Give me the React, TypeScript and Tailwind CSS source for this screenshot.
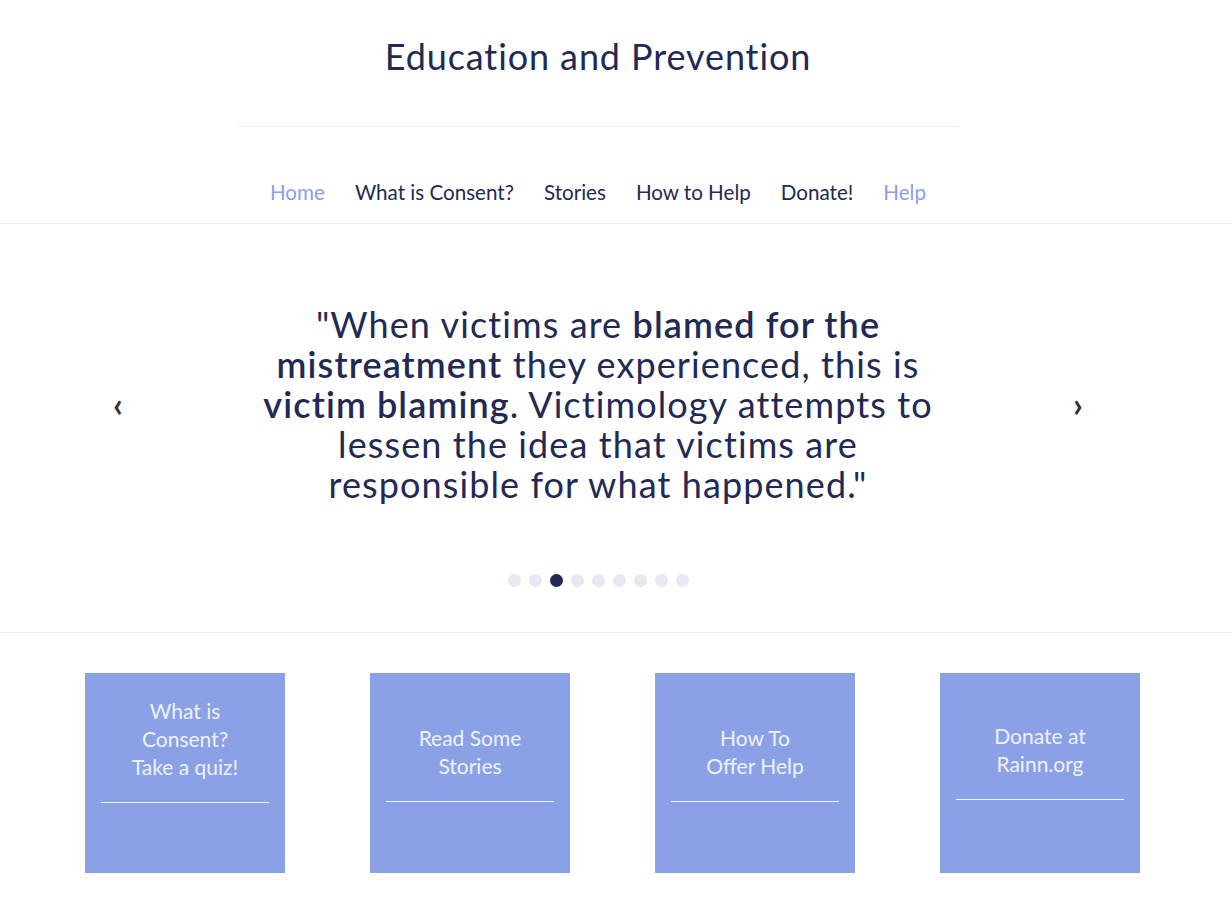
const navy = "text-[#222a54]";

function NavLink({ label, active }: { label: string; active?: boolean }) {
  return (
    <a href="#" className={active ? "text-[#8c9eeb]" : navy}>
      {label}
    </a>
  );
}

function Card({ lines, top }: { lines: string[]; top?: string }) {
  return (
    <a href="#" className="flex h-[200px] w-[200px] flex-col bg-[#8aa2e5] px-4">
      <div className={`flex flex-col justify-end ${top ?? "h-[107px]"} text-center text-[21px] leading-[28px] text-[#eef1fb]`}>
        {lines.map((l) => (
          <span key={l}>{l}</span>
        ))}
      </div>
      <div className="mt-[21px] border-t border-[#f4f6fd]" />
    </a>
  );
}

export default function App() {
  const dots = [0, 1, 2, 3, 4, 5, 6, 7, 8];
  return (
    <div className="min-h-screen bg-white font-['Lato',sans-serif]">
      <header className="border-b border-[#ececec]">
        <div className="pr-[36px]">
          <h1 className={`pt-[34px] text-center text-[36px] leading-[44px] tracking-[0.9px] ${navy}`}>
            Education and Prevention
          </h1>
          <div className="mx-auto mt-[48px] w-[721px] border-t border-[#eeeeee]" />
          <nav className="mt-[51px] flex justify-center gap-[30px] pb-[17px] text-[20.6px] leading-[28px]">
            <NavLink label="Home" active />
            <NavLink label="What is Consent?" />
            <NavLink label="Stories" />
            <NavLink label="How to Help" />
            <NavLink label="Donate!" />
            <NavLink label="Help" active />
          </nav>
        </div>
      </header>

      <section className="border-b border-[#ececec] pb-[45px] pt-[80px]">
        <div className="pr-[36px]">
          <div className="flex items-center justify-between px-[113px]">
            <button className="w-[10px] text-[34px] font-bold leading-none text-[#333]">‹</button>
            <p className={`text-center text-[36px] leading-[40px] tracking-[1.1px] ${navy}`}>
              "When victims are <b className="font-semibold">blamed for the</b>
              <br />
              <b className="font-semibold">mistreatment</b> they experienced, this is
              <br />
              <b className="font-semibold">victim blaming</b>. Victimology attempts to
              <br />
              lessen the idea that victims are
              <br />
              responsible for what happened."
            </p>
            <button className="w-[10px] text-[34px] font-bold leading-none text-[#333]">›</button>
          </div>
          <div className="mt-[70px] flex justify-center gap-[8px]">
            {dots.map((d) => (
              <span
                key={d}
                className={`h-[13px] w-[13px] rounded-full ${d === 2 ? "bg-[#222850]" : "bg-[#e5e9f2]"}`}
              />
            ))}
          </div>
        </div>
      </section>

      <section className="flex gap-[85px] pl-[85px] pt-[40px] pb-[40px]">
        <Card lines={["What is", "Consent?", "Take a quiz!"]} top="h-[108px]" />
        <Card lines={["Read Some", "Stories"]} />
        <Card lines={["How To", "Offer Help"]} />
        <Card lines={["Donate at", "Rainn.org"]} top="h-[105px]" />
      </section>
    </div>
  );
}
